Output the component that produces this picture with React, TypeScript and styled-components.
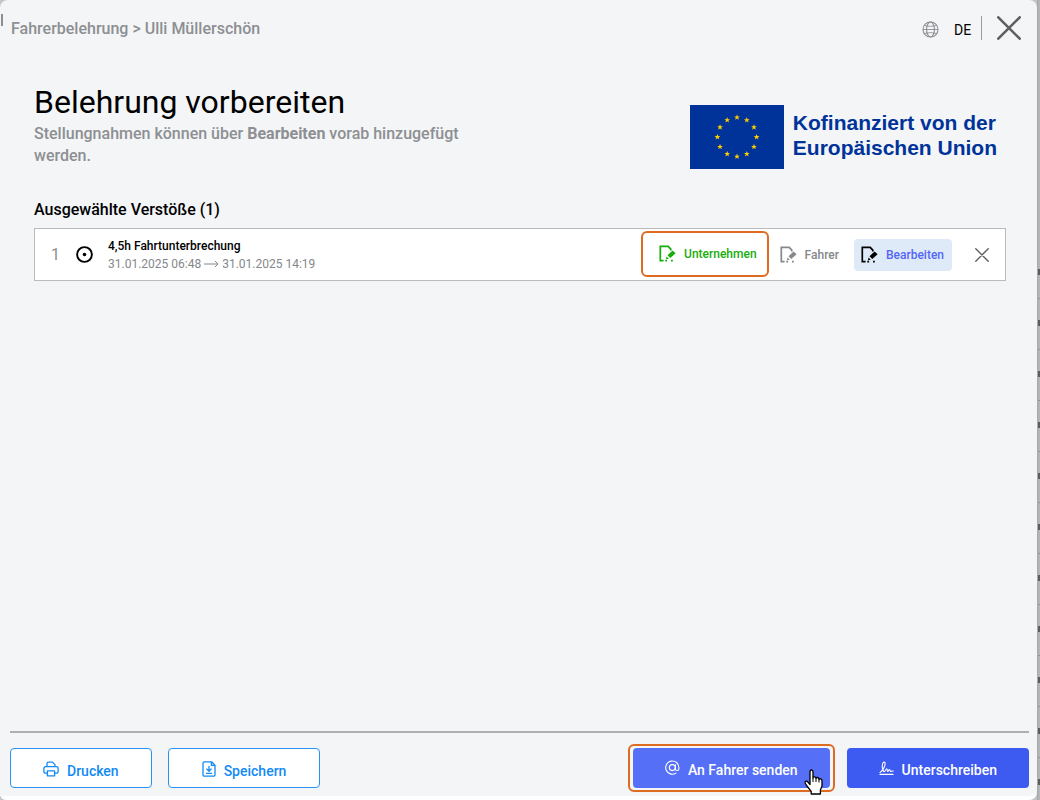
import React from "react";
import styled, { createGlobalStyle, css } from "styled-components";

const GlobalStyle = createGlobalStyle`
  * { box-sizing: border-box; }
  body { margin: 0; background: #c4c5c7; font-family: Roboto, "Liberation Sans", sans-serif; }
  h1, h2, p { margin: 0; }
  button, select { font-family: inherit; cursor: pointer; }
`;

const Stage = styled.div`
  display: flex;
  min-height: 100vh;
`;

const Panel = styled.main`
  position: relative;
  flex: 1;
  display: flex;
  flex-direction: column;
  background: #f3f5f7;
  border-bottom: 4px solid #ffffff;
  border-radius: 8px 8px 8px 6px;
`;

const Backdrop = styled.div`
  width: 3px;
  background:
    repeating-linear-gradient(to bottom, transparent 0 14px, #5c5d60 14px 20px, transparent 20px 43px, #929396 43px 44px, transparent 44px 51px) 1px 255px / 2px 100% no-repeat,
    linear-gradient(to right, #a6a7a9, #b9babc);
`;

const EdgeMark = styled.span`
  position: absolute;
  left: 1px;
  top: 14px;
  width: 2px;
  height: 12px;
  background: #8d8e90;
`;

const Header = styled.header`
  display: flex;
  align-items: center;
  justify-content: space-between;
  height: 56px;
  padding: 0 15px 0 11px;
`;

const Breadcrumb = styled.nav`
  padding-top: 2px;
  color: #8d8f92;
  font-size: 16px;
  line-height: 20px;
  font-weight: 500;
`;

const HeaderTools = styled.div`
  display: flex;
  align-items: center;
`;

const Language = styled.label`
  display: flex;
  align-items: center;
  gap: 15px;
  height: 24px;
  padding: 2px 8px 0 0;
  border-right: 1px solid #97999c;
`;

const LanguageSelect = styled.select`
  appearance: none;
  width: 19px;
  padding: 2px 0 0;
  border: 0;
  background: transparent;
  color: #000000;
  font-size: 14px;
  line-height: 18px;
`;

const IconButton = styled.button<{ $size: number }>`
  display: grid;
  place-items: center;
  width: ${(p) => p.$size}px;
  height: ${(p) => p.$size}px;
  padding: 0;
  border: 0;
  background: transparent;
  color: #5d5f62;
`;

const CloseSlot = styled.div`
  margin-left: 14px;
`;

const Content = styled.section`
  flex: 1;
  padding: 27px 31px 0 34px;
`;

const Intro = styled.div`
  display: flex;
  align-items: flex-start;
  justify-content: space-between;
`;

const IntroText = styled.div`
  max-width: 440px;
`;

const Title = styled.h1`
  font-size: 32px;
  line-height: 38px;
  font-weight: 400;
  color: #000000;
`;

const Lead = styled.p`
  margin-top: 2px;
  font-size: 16px;
  line-height: 22px;
  font-weight: 500;
  color: #8d8f92;

  strong { font-weight: 700; }
`;

const Funding = styled.div`
  display: flex;
  gap: 9px;
  padding: 22px 9px 0 0;
`;

const FundingText = styled.p`
  padding-top: 5px;
  font-family: "Liberation Sans", Arial, sans-serif;
  font-size: 21px;
  line-height: 25px;
  font-weight: 700;
  color: #003399;
`;

const SectionTitle = styled.h2`
  margin-top: 30px;
  font-size: 16px;
  line-height: 22px;
  font-weight: 500;
  color: #000000;
`;

const Violation = styled.article`
  display: flex;
  align-items: center;
  height: 53px;
  margin-top: 7px;
  padding: 0 13px 0 16px;
  border: 1px solid #b9bbbe;
  background: #ffffff;
`;

const Index = styled.span`
  width: 25px;
  font-size: 16px;
  color: #8d8f92;
`;

const ViolationText = styled.div`
  flex: 1;
  margin-left: 15px;
  font-size: 12px;
  line-height: 18px;
`;

const ViolationName = styled.p`
  font-weight: 500;
  color: #000000;
`;

const Period = styled.p`
  display: flex;
  align-items: center;
  gap: 3px;
  color: #85878a;
`;

const Tag = styled.span<{ $tone: "green" | "grey" }>`
  display: flex;
  align-items: center;
  gap: 8px;
  font-size: 12px;
  line-height: 16px;
  font-weight: 500;
  color: ${(p) => (p.$tone === "green" ? "#17ad0b" : "#85878a")};
`;

const highlight = css`
  border: 2px solid #df6a22;
  border-radius: 6px;
`;

const TagHighlight = styled.div`
  ${highlight}
  display: flex;
  align-items: center;
  height: 46px;
  margin: 0 11px 2px 0;
  padding: 0 10px 0 16px;
`;

const EditButton = styled.button`
  display: flex;
  align-items: center;
  gap: 8px;
  height: 32px;
  margin: 0 20px 0 15px;
  padding: 0 8px 0 7px;
  border: 0;
  border-radius: 4px;
  background: #dfeaf8;
  color: #5367f6;
  font-size: 12px;
  font-weight: 500;

  svg { color: #000000; }
`;

const Footer = styled.footer`
  display: flex;
  align-items: center;
  height: 65px;
  margin: 0 8px 0 10px;
  padding-top: 7px;
  border-top: 2px solid #adafb1;
`;

const ActionButton = styled.button<{ $kind: "outline" | "primary" | "hover" }>`
  display: flex;
  align-items: center;
  gap: 8px;
  height: 40px;
  padding: 4px 32px 0;
  border-radius: 4px;
  font-size: 14px;
  font-weight: 500;
  ${(p) =>
    p.$kind === "outline"
      ? css`padding-top: 5px; border: 1px solid #2994f5; background: #ffffff; color: #128af6;`
      : css`border: 0; background: ${p.$kind === "hover" ? "#5570f6" : "#3d5af1"}; color: #ffffff;`}

  svg { margin-bottom: 4px; }
`;

const SaveSlot = styled.div`
  flex: 1;
  margin-left: 16px;

  button { padding-left: 33px; padding-right: 33px; }
`;

const SendHighlight = styled.div`
  ${highlight}
  position: relative;
  margin-right: 12px;
  padding: 2px 3px;
`;

const Pointer = styled.svg`
  position: absolute;
  right: 9px;
  bottom: -5px;
  pointer-events: none;
`;

function Cross({ size, stroke }: { size: number; stroke: number }) {
  return (
    <svg width={size} height={size} viewBox="0 0 24 24" fill="none" stroke="currentColor" strokeWidth={stroke} strokeLinecap="round" aria-hidden="true">
      <path d="M1.3 1.3 22.7 22.7M22.7 1.3 1.3 22.7" />
    </svg>
  );
}

function Globe() {
  return (
    <svg width="17" height="17" viewBox="0 0 17 17" fill="none" stroke="#8d8f92" strokeWidth="1.1" aria-hidden="true">
      <circle cx="8.5" cy="8.5" r="7.5" />
      <ellipse cx="8.5" cy="8.5" rx="3.9" ry="7.5" />
      <path d="M1 8.5h15M2.4 4.4c3.6 1.2 8.6 1.2 12.2 0M2.4 12.6c3.6-1.2 8.6-1.2 12.2 0" strokeWidth="0.9" />
    </svg>
  );
}

function EditDoc() {
  return (
    <svg width="17" height="17" viewBox="0 0 17 17" aria-hidden="true">
      <path d="M4.6 15.6H1.3V1.4H9.2L11.8 4.2V5.4" fill="none" stroke="currentColor" strokeWidth="1.7" />
      <path d="M13.6 5.4 16.6 8.3 11.3 12.9 8.5 10.2Z" fill="currentColor" />
      <path d="M7.4 11.4 9.9 13.8 7.1 14.2Z" fill="currentColor" />
      <path d="M6.3 14.8h1.8v1.8H6.3zM12 14.7h1.8v1.9H12z" fill="currentColor" />
    </svg>
  );
}

function Dial() {
  return (
    <svg width="17" height="17" viewBox="0 0 17 17" aria-hidden="true">
      <circle cx="8.5" cy="8.5" r="7.4" fill="none" stroke="#000000" strokeWidth="1.9" />
      <circle cx="8.5" cy="8.5" r="1.8" fill="#000000" />
    </svg>
  );
}

function LongArrow() {
  return (
    <svg width="15" height="8" viewBox="0 0 15 8" fill="none" stroke="currentColor" strokeWidth="1" aria-hidden="true">
      <path d="M0 4h14M11 1l3 3-3 3" />
    </svg>
  );
}

function Printer() {
  return (
    <svg width="16" height="16" viewBox="0 0 16 16" fill="none" stroke="currentColor" strokeWidth="1.3" strokeLinejoin="round" aria-hidden="true">
      <path d="M4 5.6V2.4a1.3 1.3 0 0 1 1.3-1.3h4.1L12 3.6v2" />
      <path d="M4.2 12.2H2.4a1.5 1.5 0 0 1-1.5-1.5V7.3a1.6 1.6 0 0 1 1.6-1.6h11a1.6 1.6 0 0 1 1.6 1.6v3.4a1.5 1.5 0 0 1-1.5 1.5h-1.8" />
      <path d="M4.4 9.8h7.2v5.1H4.4z" />
    </svg>
  );
}

function SaveDoc() {
  return (
    <svg width="14" height="16" viewBox="0 0 14 16" fill="none" stroke="currentColor" strokeWidth="1.3" strokeLinejoin="round" aria-hidden="true">
      <path d="M1 2.2A1.4 1.4 0 0 1 2.4.8H9.6L13 4.2v9.6a1.4 1.4 0 0 1-1.4 1.4H2.4A1.4 1.4 0 0 1 1 13.8Z" />
      <path d="M9.4 1v3.4H13M7 5v5M4.4 7.6 7 10.2l2.6-2.6M4 12.3h6" />
    </svg>
  );
}

function AtSign() {
  return (
    <svg width="15" height="16" viewBox="0 0 15 16" fill="none" stroke="currentColor" strokeWidth="1.1" strokeLinecap="round" aria-hidden="true">
      <circle cx="7.3" cy="7.6" r="3" />
      <path d="M10.4 4.7v4a1.7 1.7 0 0 0 3.5 0V7.6a6.6 6.6 0 1 0-3 5.5" />
    </svg>
  );
}

function Signature() {
  return (
    <svg width="15" height="15" viewBox="0 0 15 15" fill="none" stroke="currentColor" strokeWidth="1.1" strokeLinecap="round" strokeLinejoin="round" aria-hidden="true">
      <path d="M1 11.6C3.6 9.6 6.3 5.4 6.1 2.5 6 .6 4.3.6 3.6 2.8 2.9 5.2 3.4 9.4 4.9 10.6 6.2 11.2 6.8 7.6 7.8 7.7c.8.1 0 2.7.9 2.8.8.1 1-2.2 1.8-2 .7.2.4 1.8 1.2 1.9.8.1 1.2-.5 2.5-.4M1 13.4h13" />
    </svg>
  );
}

const STAR = "0,-3 .8,-.9 2.9,-.9 1.2,.4 1.8,2.5 0,1.2 -1.8,2.5 -1.2,.4 -2.9,-.9 -.8,-.9";

function EuFlag() {
  return (
    <svg width="94" height="64" viewBox="0 0 94 64" role="img" aria-label="Flagge der Europäischen Union">
      <rect width="94" height="64" fill="#003399" />
      {Array.from({ length: 12 }, (_, i) => {
        const angle = (i * Math.PI) / 6;
        return (
          <polygon key={i} points={STAR} fill="#ffcc00" transform={`translate(${47 + 19.6 * Math.sin(angle)} ${32 - 19.6 * Math.cos(angle)})`} />
        );
      })}
    </svg>
  );
}

function HandPointer() {
  return (
    <Pointer width="20" height="26" viewBox="0 0 20 26" aria-hidden="true">
      <path
        d="M6 15.5V3Q6 1 7.5 1T9 3v6q0-1.4 1.5-1.2T12 9.5q.1-1.2 1.5-1T15 10.5q.2-1 1.6-.7T18 11.8V17l-1.6 4v4H7.2v-2.6L2.6 16.5Q.4 13.5 1.4 12.4 2.6 11.4 4.4 13.6Z"
        fill="#ffffff" stroke="#000000" strokeWidth="1.3" strokeLinejoin="round"
      />
      <path d="M9 9v4M12 9.5V13M15 10.5V13.5" stroke="#000000" strokeWidth="1" />
    </Pointer>
  );
}

export default function App() {
  return (
    <>
      <GlobalStyle />
      <Stage>
        <Panel>
          <EdgeMark />
          <Header>
            <Breadcrumb>Fahrerbelehrung &gt; Ulli Müllerschön</Breadcrumb>
            <HeaderTools>
              <Language>
                <Globe />
                <LanguageSelect aria-label="Sprache" defaultValue="DE">
                  <option>DE</option>
                </LanguageSelect>
              </Language>
              <CloseSlot>
                <IconButton $size={26} aria-label="Schließen"><Cross size={24} stroke={2.6} /></IconButton>
              </CloseSlot>
            </HeaderTools>
          </Header>

          <Content>
            <Intro>
              <IntroText>
                <Title>Belehrung vorbereiten</Title>
                <Lead>
                  Stellungnahmen können über <strong>Bearbeiten</strong> vorab hinzugefügt
                  <br />
                  werden.
                </Lead>
              </IntroText>
              <Funding>
                <EuFlag />
                <FundingText>Kofinanziert von der<br />Europäischen Union</FundingText>
              </Funding>
            </Intro>

            <SectionTitle>Ausgewählte Verstöße (1)</SectionTitle>
            <Violation>
              <Index>1</Index>
              <Dial />
              <ViolationText>
                <ViolationName>4,5h Fahrtunterbrechung</ViolationName>
                <Period>31.01.2025 06:48 <LongArrow /> 31.01.2025 14:19</Period>
              </ViolationText>
              <TagHighlight>
                <Tag $tone="green"><EditDoc />Unternehmen</Tag>
              </TagHighlight>
              <Tag $tone="grey"><EditDoc />Fahrer</Tag>
              <EditButton><EditDoc />Bearbeiten</EditButton>
              <IconButton $size={20} aria-label="Entfernen"><Cross size={14} stroke={2.4} /></IconButton>
            </Violation>
          </Content>

          <Footer>
            <ActionButton $kind="outline"><Printer />Drucken</ActionButton>
            <SaveSlot>
              <ActionButton $kind="outline"><SaveDoc />Speichern</ActionButton>
            </SaveSlot>
            <SendHighlight>
              <ActionButton $kind="hover"><AtSign />An Fahrer senden</ActionButton>
              <HandPointer />
            </SendHighlight>
            <ActionButton $kind="primary"><Signature />Unterschreiben</ActionButton>
          </Footer>
        </Panel>
        <Backdrop />
      </Stage>
    </>
  );
}
